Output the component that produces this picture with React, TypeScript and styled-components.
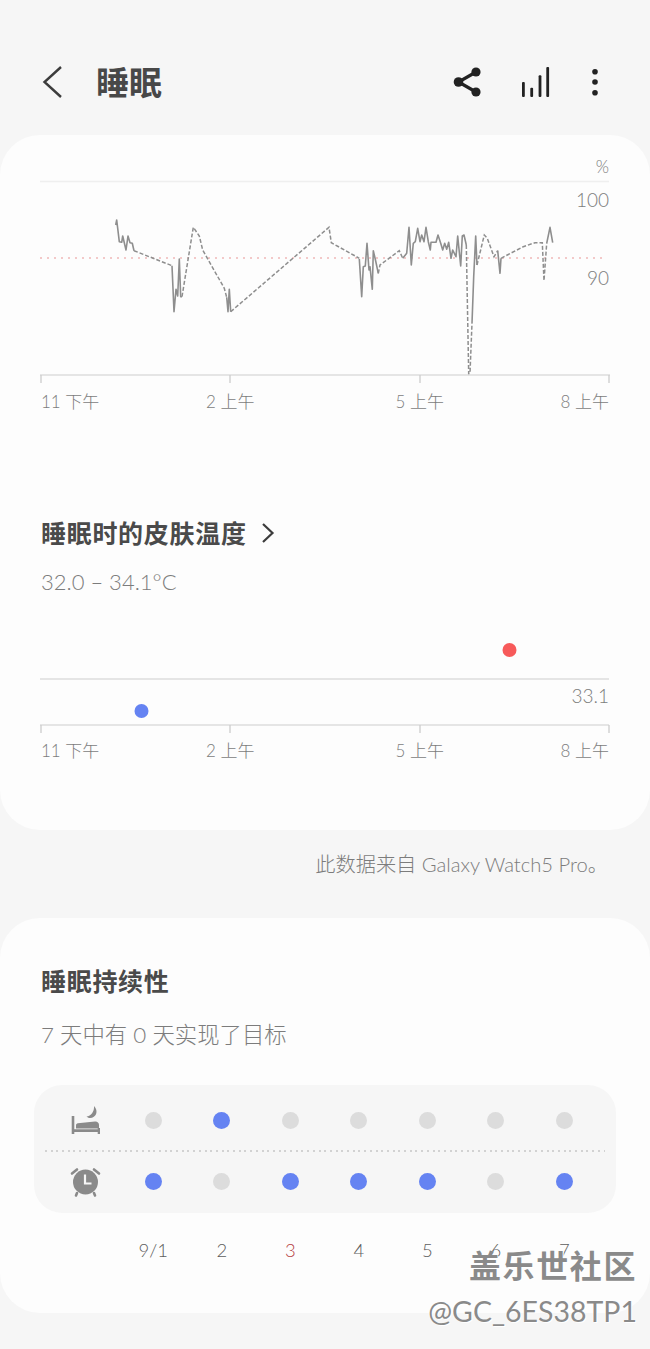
import styled, { createGlobalStyle } from "styled-components";

const GlobalStyle = createGlobalStyle`
  html, body {
    margin: 0;
    padding: 0;
    background: #f6f6f6;
  }
  body {
    font-family: "Lato", "Noto Sans CJK SC", sans-serif;
  }
`;

const Page = styled.div`
  position: relative;
  width: 650px;
  height: 1349px;
  overflow: hidden;
  background: #f6f6f6;
`;

const Header = styled.header`
  box-sizing: border-box;
  display: flex;
  align-items: center;
  height: 135px;
  padding: 44px 50px 15px 40px;
`;

const Title = styled.h1`
  margin: 0 0 0 32px;
  font-size: 33px;
  font-weight: 700;
  line-height: 40px;
  color: #484848;
`;

const Actions = styled.div`
  display: flex;
  align-items: center;
  gap: 39px;
  margin-left: auto;

  svg {
    display: block;
  }
`;

const Card = styled.section<{ $top?: number; $bottom: number }>`
  display: flow-root;
  padding: ${({ $top }) => $top ?? 0}px 0 ${({ $bottom }) => $bottom}px;
  border-radius: 40px;
  background: #fdfdfd;
`;

const ChartArea = styled.div<{ $top: number; $height: number }>`
  position: relative;
  width: 570px;
  height: ${({ $height }) => $height}px;
  margin: ${({ $top }) => $top}px 0 0 40px;

  svg {
    display: block;
  }
`;

const ChartValue = styled.span<{ $top: number; $size?: number }>`
  position: absolute;
  top: ${({ $top }) => $top}px;
  right: 1px;
  font-size: ${({ $size }) => $size ?? 19}px;
  font-weight: 300;
  line-height: 24px;
  color: #7c7c7c;
`;

const AxisLabels = styled.div<{ $top: number }>`
  display: flex;
  justify-content: space-between;
  width: 568px;
  margin: ${({ $top }) => $top}px 0 0 41px;
  font-size: 17px;
  font-weight: 300;
  line-height: 24px;
  color: #7c7c7c;
`;

// zero width so that each label hangs off its tick
const AxisLabel = styled.span<{ $align: "flex-start" | "center" | "flex-end" }>`
  display: flex;
  justify-content: ${({ $align }) => $align};
  width: 0;
  white-space: nowrap;
`;

const SectionTitle = styled.h2<{ $top: number }>`
  display: flex;
  align-items: center;
  gap: 14px;
  margin: ${({ $top }) => $top}px 0 0 41px;
  font-size: 25px;
  font-weight: 700;
  line-height: 36px;
  letter-spacing: 0.7px;
  color: #4a4a4a;
`;

const Subtitle = styled.p<{ $top: number; $size: number }>`
  margin: ${({ $top }) => $top}px 0 0 41px;
  font-size: ${({ $size }) => $size}px;
  font-weight: 300;
  line-height: 30px;
  color: #7c7c7c;
`;

const SourceNote = styled.p`
  margin: 20px 42px 38px 0;
  font-size: 20.2px;
  font-weight: 300;
  line-height: 29px;
  padding-bottom: 1px;
  text-align: right;
  color: #7c7c7c;
`;

const ScorePanel = styled.div`
  box-sizing: border-box;
  height: 128px;
  margin: 35px 34px 0;
  padding-top: 6px;
  border-radius: 28px;
  background: #f6f6f6;
`;

const ScoreRow = styled.div<{ $height: number }>`
  display: grid;
  grid-template-columns: 85px repeat(7, 68.5px);
  align-items: center;
  height: ${({ $height }) => $height}px;
`;

const RowIcon = styled.div`
  display: flex;
  justify-content: center;
  padding-left: 17px;

  svg {
    display: block;
  }
`;

const DotCell = styled.div`
  display: flex;
  justify-content: center;
`;

const Dot = styled.span<{ $on: boolean }>`
  width: 17px;
  height: 17px;
  border-radius: 50%;
  background: ${({ $on }) => ($on ? "#6583f2" : "#dcdcdc")};
`;

const DottedRule = styled.div`
  height: 2px;
  margin: 0 11px;
  background: repeating-linear-gradient(90deg, #d2d2d2 0 2px, transparent 2px 5.7px);
`;

const DateRow = styled.div`
  display: grid;
  grid-template-columns: repeat(7, 68.5px);
  margin: 25px 0 0 119px;
  font-size: 18.5px;
  font-weight: 300;
  line-height: 24px;
  text-align: center;
`;

const DateLabel = styled.span<{ $today?: boolean }>`
  color: ${({ $today }) => ($today ? "#b5413f" : "#5e5e5e")};
`;

const Watermark = styled.div`
  position: absolute;
  right: 13px;
  top: 1243px;
  text-align: right;
  color: #8a8a8a;
  text-shadow: 1px 1px 0 #ffffff, -1px 0 0 rgba(255, 255, 255, 0.6);
`;

const WatermarkName = styled.div`
  font-size: 32px;
  font-weight: 700;
  line-height: 46px;
  letter-spacing: 1.6px;
`;

const WatermarkUser = styled.div`
  font-size: 28.5px;
  line-height: 44px;
`;

const ICON = "#8a8a8a";
const LINE = "#8e8e8e";

type Pt = [number, number];
const toPath = (pts: Pt[]) => "M" + pts.map(([x, y]) => `${x} ${y}`).join("L");

// traced from the reference, page coordinates
const solidRuns: Pt[][] = [
  [[115.7, 225], [116.7, 220], [119.3, 241.7], [121.7, 242.3], [122.7, 236], [126, 250], [128, 236], [130, 242.7], [132.3, 243.3], [134, 250.7]],
  [[172, 265.7], [174, 311.7], [176, 289.3], [177.7, 296], [179.3, 259], [180.7, 296.7], [182, 296.7]],
  [[226.7, 297.3], [228, 311.7], [229.3, 289.3], [230.7, 311.7]],
  [[359.3, 259], [361.7, 296.7], [363.3, 266.7], [365.3, 266], [367, 243.3], [369, 270], [370, 266.7], [372.3, 289.3], [373.3, 250.7], [375.3, 259.3], [378.3, 273.3]],
  [[402.7, 258.3], [406.7, 253.3], [409, 227.3], [411.3, 265], [413.3, 243.3], [415.3, 241.7], [417.7, 228.3], [420, 241.7], [421.7, 235], [424, 241.7], [426, 227.3], [428.3, 241.7], [430.3, 250], [431, 242.3], [436, 242.3], [438, 235], [440.7, 243.3], [442.7, 250], [444.7, 243.3], [446.7, 249.3], [448.7, 242.3], [451, 258.3], [452.7, 250], [456, 256.7], [457.7, 236], [460.7, 266], [462.3, 236], [464, 235], [466.3, 245]],
  [[472, 323.3], [473.7, 276.7], [475.7, 236], [477, 265]],
  [[497.7, 250.7], [500, 273.3], [501, 258.3]],
  [[546.7, 243.3], [550, 227.3], [552.7, 242.7]],
];

const dashedRuns: Pt[][] = [
  [[134, 250.7], [172, 265.7]],
  [[182, 296.7], [193.3, 227.3], [199.3, 236], [202.7, 250], [224.3, 288.3], [226.7, 297.3]],
  [[230.7, 311.7], [329, 227.3], [331.3, 242.7], [359.3, 258.3]],
  [[378.3, 273.3], [380, 265], [399.3, 250.7], [402.7, 258.3]],
  [[466.3, 245], [468.7, 374], [470, 373.3], [472, 323.3]],
  [[477, 265], [484.3, 235], [487.3, 238.3], [494, 256.7], [497.7, 250.7]],
  [[501, 258.3], [523.3, 246.7], [535, 242.7], [542.3, 242.7], [544, 280.7], [546.7, 243.3]],
];

const ticks = [41, 230, 420, 609];

const BackIcon = () => (
  <svg width="24" height="36" viewBox="0 0 24 36" fill="none">
    <path d="M21 3L4.5 18L21 33" stroke="#3c3c3c" strokeWidth="2.4" />
  </svg>
);

const ShareIcon = () => (
  <svg width="30" height="30" viewBox="0 0 30 30" fill="#222">
    <path d="M24 5L6.5 15L24 25" fill="none" stroke="#222" strokeWidth="3.2" />
    <circle cx="24" cy="5" r="4.6" />
    <circle cx="6.5" cy="15" r="4.8" />
    <circle cx="24" cy="25" r="4.6" />
  </svg>
);

const BarsIcon = () => (
  <svg width="30" height="30" viewBox="0 0 30 30" fill="#222">
    <rect x="1" y="15" width="2.8" height="15" rx="1" />
    <rect x="9.3" y="20.7" width="2.8" height="9.3" rx="1" />
    <rect x="17.6" y="8.3" width="2.8" height="21.7" rx="1" />
    <rect x="25.3" y="0" width="2.8" height="30" rx="1" />
  </svg>
);

const MoreIcon = () => (
  <svg width="10" height="30" viewBox="0 0 10 30" fill="#222">
    <circle cx="5" cy="4.7" r="2.8" />
    <circle cx="5" cy="15" r="2.8" />
    <circle cx="5" cy="25.7" r="2.8" />
  </svg>
);

const ChevronIcon = () => (
  <svg width="14" height="22" viewBox="0 0 14 22" fill="none">
    <path d="M2 2L11.5 11L2 20" stroke="#3c3c3c" strokeWidth="2.2" />
  </svg>
);

const BedIcon = () => (
  <svg width="32" height="32" viewBox="0 0 32 32" fill={ICON}>
    <path d="M2.7 11h2.6v18H2.7zM28.7 23h2.3v6h-2.3zM2.7 24.2H31v2.8H2.7z" />
    <path d="M7 23.5v-3.3c0-1 .8-1.7 1.8-1.9L26 16.4c2.2-.2 4 1.2 4 3.4v3.7z" />
    <path d="M25 1C30 6 27 13 21 13C19.5 13 18.3 12.4 17.5 11.5C22 11 25.5 6.5 25 1z" />
  </svg>
);

const AlarmIcon = () => (
  <svg width="32" height="32" viewBox="0 0 32 32">
    <circle cx="16.5" cy="16" r="12.5" fill={ICON} />
    <path d="M16 8.500v9h6.500" fill="none" stroke="#f6f6f6" strokeWidth="2.2" />
    <path d="M3 7.500L8 3.500M30 7.500L25 3.500" stroke={ICON} strokeWidth="2.6" strokeLinecap="round" fill="none" />
    <path d="M8 27l-1 2.500M25 27l1 2.500" stroke={ICON} strokeWidth="2.6" strokeLinecap="round" fill="none" />
  </svg>
);

const sleepDots = [false, true, false, false, false, false, false];
const wakeDots = [true, false, true, true, true, false, true];
const dates = ["9/1", "2", "3", "4", "5", "6", "7"];

const Axis = () => (
  <>
    <AxisLabel $align="flex-start">11 下午</AxisLabel>
    <AxisLabel $align="center">2 上午</AxisLabel>
    <AxisLabel $align="center">5 上午</AxisLabel>
    <AxisLabel $align="flex-end">8 上午</AxisLabel>
  </>
);

const App = () => {
  return (
    <Page>
      <GlobalStyle />
      <Header>
        <BackIcon />
        <Title>睡眠</Title>
        <Actions>
          <ShareIcon />
          <BarsIcon />
          <MoreIcon />
        </Actions>
      </Header>

      <Card $bottom={67}>
        <ChartArea $top={20} $height={235}>
          <svg width="570" height="235" viewBox="40 155 570 235" fill="none">
            <path d="M40 181.5H609" stroke="#efefef" strokeWidth="1.5" />
            <path d="M40 258H606" stroke="#f0b8b8" strokeWidth="1.3" strokeDasharray="2 5" />
            {solidRuns.map((run, i) => (
              <path key={i} d={toPath(run)} stroke={LINE} strokeWidth="1.6" strokeLinejoin="round" />
            ))}
            {dashedRuns.map((run, i) => (
              <path key={i} d={toPath(run)} stroke={LINE} strokeWidth="1.5" strokeDasharray="4 2" />
            ))}
            <path d="M40 375H610" stroke="#dcdcdc" strokeWidth="1.6" />
            {ticks.map((x) => (
              <path key={x} d={`M${x} 375V383`} stroke="#cfcfcf" strokeWidth="1.4" />
            ))}
          </svg>
          <ChartValue $top={0} $size={17}>%</ChartValue>
          <ChartValue $top={33}>100</ChartValue>
          <ChartValue $top={111}>90</ChartValue>
        </ChartArea>
        <AxisLabels $top={0}>
          <Axis />
        </AxisLabels>

        <SectionTitle $top={101}>
          睡眠时的皮肤温度
          <ChevronIcon />
        </SectionTitle>
        <Subtitle $top={16} $size={22}>32.0 – 34.1°C</Subtitle>

        <ChartArea $top={43} $height={95}>
          <svg width="570" height="95" viewBox="40 640 570 95" fill="none">
            <path d="M40 679H609" stroke="#dcdcdc" strokeWidth="1.6" />
            <path d="M40 725H609" stroke="#dcdcdc" strokeWidth="1.6" />
            {ticks.map((x) => (
              <path key={x} d={`M${x} 725V733`} stroke="#cfcfcf" strokeWidth="1.4" />
            ))}
            <circle cx="141.5" cy="711" r="7" fill="#6583f2" />
            <circle cx="509.5" cy="650" r="7" fill="#f75a5a" />
          </svg>
          <ChartValue $top={44}>33.1</ChartValue>
        </ChartArea>
        <AxisLabels $top={4}>
          <Axis />
        </AxisLabels>
      </Card>

      <SourceNote>此数据来自 Galaxy Watch5 Pro。</SourceNote>

      <Card $top={45} $bottom={51}>
        <SectionTitle $top={0}>睡眠持续性</SectionTitle>
        <Subtitle $top={21} $size={22.4}>7 天中有 0 天实现了目标</Subtitle>
        <ScorePanel>
          <ScoreRow $height={59}>
            <RowIcon>
              <BedIcon />
            </RowIcon>
            {sleepDots.map((on, i) => (
              <DotCell key={i}>
                <Dot $on={on} />
              </DotCell>
            ))}
          </ScoreRow>
          <DottedRule />
          <ScoreRow $height={59}>
            <RowIcon>
              <AlarmIcon />
            </RowIcon>
            {wakeDots.map((on, i) => (
              <DotCell key={i}>
                <Dot $on={on} />
              </DotCell>
            ))}
          </ScoreRow>
        </ScorePanel>
        <DateRow>
          {dates.map((d) => (
            <DateLabel key={d} $today={d === "3"}>
              {d}
            </DateLabel>
          ))}
        </DateRow>
      </Card>

      <Watermark>
        <WatermarkName>盖乐世社区</WatermarkName>
        <WatermarkUser>@GC_6ES38TP1</WatermarkUser>
      </Watermark>
    </Page>
  );
};

export default App;
